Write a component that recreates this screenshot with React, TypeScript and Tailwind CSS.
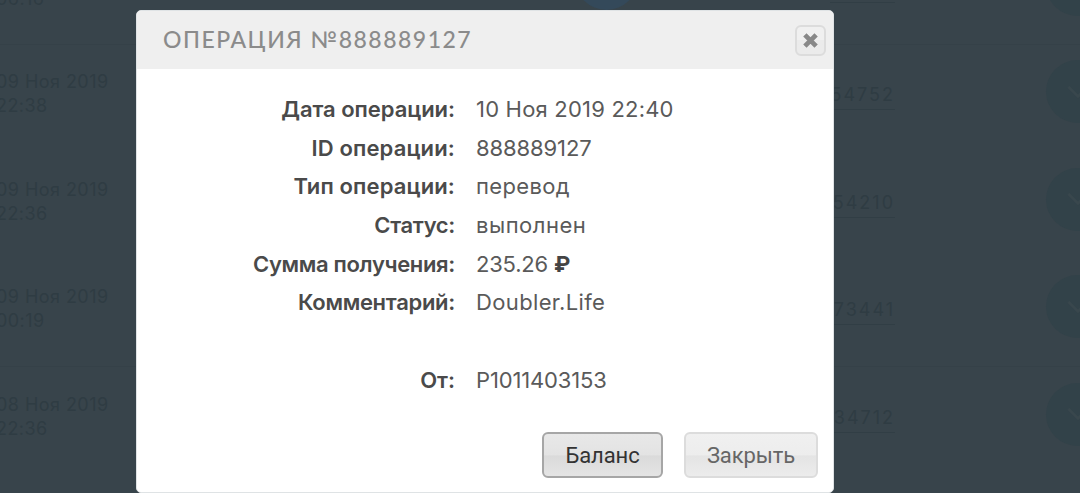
import { ReactNode } from "react";

interface HistoryRow {
  date: string;
  time: string;
  account: string;
  divider: string;
}

interface Detail {
  label: string;
  value: ReactNode;
  labelClass: string;
  valueClass: string;
}

const history: HistoryRow[] = [
  { date: "09 Ноя 2019", time: "06:16", account: "54752", divider: "border-[#354148]" },
  { date: "09 Ноя 2019", time: "22:38", account: "54752", divider: "border-transparent" },
  { date: "09 Ноя 2019", time: "22:36", account: "54210", divider: "border-transparent" },
  { date: "09 Ноя 2019", time: "00:19", account: "73441", divider: "border-[#354148]" },
  { date: "08 Ноя 2019", time: "22:36", account: "34712", divider: "border-transparent" },
];

const details: Detail[] = [
  {
    label: "Дата операции:",
    value: "10 Ноя 2019 22:40",
    labelClass: "tracking-[-0.05px]",
    valueClass: "tracking-[0.2px]",
  },
  {
    label: "ID операции:",
    value: "888889127",
    labelClass: "tracking-[0.15px]",
    valueClass: "tracking-[-0.1px]",
  },
  {
    label: "Тип операции:",
    value: "перевод",
    labelClass: "tracking-[0.13px]",
    valueClass: "tracking-[0.35px]",
  },
  {
    label: "Статус:",
    value: "выполнен",
    labelClass: "tracking-[-0.35px]",
    valueClass: "tracking-[0.5px]",
  },
  {
    label: "Сумма получения:",
    value: (
      <>
        235.26 <span className="font-bold text-[#444]">₽</span>
      </>
    ),
    labelClass: "tracking-[-0.33px]",
    valueClass: "tracking-[-0.2px]",
  },
  {
    label: "Комментарий:",
    value: "Doubler.Life",
    labelClass: "tracking-[-0.3px]",
    valueClass: "tracking-[0.35px]",
  },
  { label: "", value: "", labelClass: "", valueClass: "" },
  {
    label: "От:",
    value: "P1011403153",
    labelClass: "",
    valueClass: "tracking-[-0.15px]",
  },
];

function HistoryList() {
  return (
    <div className="-mt-[63px]">
      {history.map((row, i) => (
        <div
          key={i}
          className={`flex h-[107.5px] items-center border-b text-[18px] text-[#2f3c43] ${row.divider}`}
        >
          <div className="-ml-1 w-[200px] shrink-0 pb-[7px] leading-6 tracking-[0.45px]">
            <div>{row.date}</div>
            <div>{row.time}</div>
          </div>
          <div className="flex w-[699px] shrink-0 justify-end pb-1">
            <span className="border-b border-[#313e45] leading-7 tracking-[2px]">{row.account}</span>
          </div>
          <div className="mb-3 ml-[151px] flex size-[63px] shrink-0 items-center justify-center rounded-full bg-[#324249]">
            <svg width="24" height="14" viewBox="0 0 26 16" fill="none" stroke="#39474d" strokeWidth="3">
              <path d="M2 2l11 11L24 2" />
            </svg>
          </div>
        </div>
      ))}
    </div>
  );
}

function DialogHeader() {
  return (
    <div className="flex h-[58px] items-center justify-between bg-[#efefef] pr-[7px] pl-[26px]">
      <h2 className="pb-px font-['Lato',sans-serif] text-[23px] font-medium tracking-[1.5px] text-[#8b8b8b]">
        ОПЕРАЦИЯ №888889127
      </h2>
      <button className="flex size-[31px] items-center justify-center rounded-[6px] border-2 border-[#dcdcdc] bg-linear-to-b from-[#f0f0f0] from-50% to-[#ebebeb] to-50%">
        <svg width="15" height="15" viewBox="0 0 16 16" fill="none" stroke="#888" strokeWidth="5">
          <path d="M2 2l12 12M14 2L2 14" />
        </svg>
      </button>
    </div>
  );
}

export default function App() {
  return (
    <div className="relative h-[493px] w-[1080px] overflow-hidden bg-[#38444b] font-['Inter','Liberation_Sans',sans-serif]">
      <HistoryList />
      <div className="absolute -top-[53px] left-[575px] size-[63px] rounded-full bg-[#34495a]" />

      <div className="absolute top-[10px] left-[136px] h-[483px] w-[698px] overflow-hidden rounded-[5px] border border-[#dfe3e5] bg-white">
        <DialogHeader />
        <dl className="pt-[21px]">
          {details.map((d, i) => (
            <div key={i} className="flex h-[38.7px] items-center text-[22px] whitespace-nowrap">
              <dt className="flex w-[318px] justify-end font-semibold text-[#4a4a4a]">
                <span className={d.labelClass}>{d.label}</span>
              </dt>
              <dd className="ml-[21px] text-[#5a5a5a]">
                <span className={d.valueClass}>{d.value}</span>
              </dd>
            </div>
          ))}
        </dl>
        <div className="mt-[32.5px] flex justify-end gap-[21px] pr-[15px] font-['Roboto',sans-serif] text-[22px] tracking-[-0.1px]">
          <button className="h-[46px] w-[121px] rounded-[6px] border-2 border-[#a6a6a6] bg-[linear-gradient(#e8e8e8,#e3e3e3_50%,#dadada_52%,#e4e4e4)] text-[#333]">
            Баланс
          </button>
          <button className="h-[46px] w-[134px] rounded-[6px] border-2 border-[#dcdcdc] bg-[linear-gradient(#f0f0f0,#ededed_50%,#e4e4e4_52%,#ececec)] text-[#666]">
            Закрыть
          </button>
        </div>
      </div>
    </div>
  );
}
